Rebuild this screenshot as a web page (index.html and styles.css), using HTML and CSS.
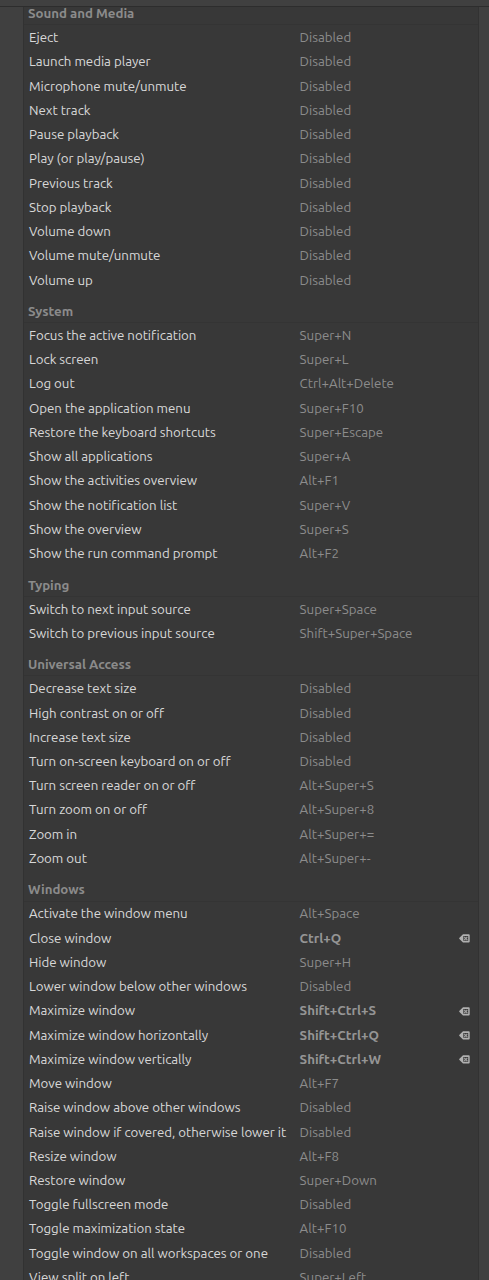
FILE: index.html
```html
<!DOCTYPE html>
<html lang="en">
<head>
<meta charset="utf-8">
<title>Keyboard Shortcuts</title>
<link rel="stylesheet" href="styles.css">
</head>
<body>
<svg class="defs" aria-hidden="true"><symbol id="reset" viewBox="0 0 11 9"><path fill-rule="evenodd" d="M4 0.3H9.7Q10.7 0.3 10.7 1.3V7.5Q10.7 8.5 9.7 8.5H4L0.2 4.7V4.1ZM4.3 2V6.8H9.2V2Z"/><path d="M5.2 2.9L8.3 6M8.3 2.9L5.2 6" stroke="currentColor" stroke-width="1.2"/></symbol></svg>
<header class="titlebar"></header>
<main class="list">
<section><h2>Sound and Media</h2>
<div class="row"><span>Eject</span><kbd>Disabled</kbd></div>
<div class="row"><span>Launch media player</span><kbd>Disabled</kbd></div>
<div class="row"><span>Microphone mute/unmute</span><kbd>Disabled</kbd></div>
<div class="row"><span>Next track</span><kbd>Disabled</kbd></div>
<div class="row"><span>Pause playback</span><kbd>Disabled</kbd></div>
<div class="row"><span>Play (or play/pause)</span><kbd>Disabled</kbd></div>
<div class="row"><span>Previous track</span><kbd>Disabled</kbd></div>
<div class="row"><span>Stop playback</span><kbd>Disabled</kbd></div>
<div class="row"><span>Volume down</span><kbd>Disabled</kbd></div>
<div class="row"><span>Volume mute/unmute</span><kbd>Disabled</kbd></div>
<div class="row"><span>Volume up</span><kbd>Disabled</kbd></div>
</section>
<section><h2>System</h2>
<div class="row"><span>Focus the active notification</span><kbd>Super+N</kbd></div>
<div class="row"><span>Lock screen</span><kbd>Super+L</kbd></div>
<div class="row"><span>Log out</span><kbd>Ctrl+Alt+Delete</kbd></div>
<div class="row"><span>Open the application menu</span><kbd>Super+F10</kbd></div>
<div class="row"><span>Restore the keyboard shortcuts</span><kbd>Super+Escape</kbd></div>
<div class="row"><span>Show all applications</span><kbd>Super+A</kbd></div>
<div class="row"><span>Show the activities overview</span><kbd>Alt+F1</kbd></div>
<div class="row"><span>Show the notification list</span><kbd>Super+V</kbd></div>
<div class="row"><span>Show the overview</span><kbd>Super+S</kbd></div>
<div class="row"><span>Show the run command prompt</span><kbd>Alt+F2</kbd></div>
</section>
<section><h2>Typing</h2>
<div class="row"><span>Switch to next input source</span><kbd>Super+Space</kbd></div>
<div class="row"><span>Switch to previous input source</span><kbd>Shift+Super+Space</kbd></div>
</section>
<section><h2>Universal Access</h2>
<div class="row"><span>Decrease text size</span><kbd>Disabled</kbd></div>
<div class="row"><span>High contrast on or off</span><kbd>Disabled</kbd></div>
<div class="row"><span>Increase text size</span><kbd>Disabled</kbd></div>
<div class="row"><span>Turn on-screen keyboard on or off</span><kbd>Disabled</kbd></div>
<div class="row"><span>Turn screen reader on or off</span><kbd>Alt+Super+S</kbd></div>
<div class="row"><span>Turn zoom on or off</span><kbd>Alt+Super+8</kbd></div>
<div class="row"><span>Zoom in</span><kbd>Alt+Super+=</kbd></div>
<div class="row"><span>Zoom out</span><kbd>Alt+Super+-</kbd></div>
</section>
<section><h2>Windows</h2>
<div class="row"><span>Activate the window menu</span><kbd>Alt+Space</kbd></div>
<div class="row"><span>Close window</span><kbd class="custom">Ctrl+Q</kbd><svg class="reset"><use href="#reset"/></svg></div>
<div class="row"><span>Hide window</span><kbd>Super+H</kbd></div>
<div class="row"><span>Lower window below other windows</span><kbd>Disabled</kbd></div>
<div class="row"><span>Maximize window</span><kbd class="custom">Shift+Ctrl+S</kbd><svg class="reset"><use href="#reset"/></svg></div>
<div class="row"><span>Maximize window horizontally</span><kbd class="custom">Shift+Ctrl+Q</kbd><svg class="reset"><use href="#reset"/></svg></div>
<div class="row"><span>Maximize window vertically</span><kbd class="custom">Shift+Ctrl+W</kbd><svg class="reset"><use href="#reset"/></svg></div>
<div class="row"><span>Move window</span><kbd>Alt+F7</kbd></div>
<div class="row"><span>Raise window above other windows</span><kbd>Disabled</kbd></div>
<div class="row"><span>Raise window if covered, otherwise lower it</span><kbd>Disabled</kbd></div>
<div class="row"><span>Resize window</span><kbd>Alt+F8</kbd></div>
<div class="row"><span>Restore window</span><kbd>Super+Down</kbd></div>
<div class="row"><span>Toggle fullscreen mode</span><kbd>Disabled</kbd></div>
<div class="row"><span>Toggle maximization state</span><kbd>Alt+F10</kbd></div>
<div class="row"><span>Toggle window on all workspaces or one</span><kbd>Disabled</kbd></div>
<div class="row"><span>View split on left</span><kbd>Super+Left</kbd></div>
</section>
</main>
</body>
</html>
```
FILE: styles.css
```css
* { box-sizing: border-box; }
body {
  margin: 0;
  height: 1280px;
  overflow: hidden;
  display: flex;
  flex-direction: column;
  background: #404040;
  color: #d8d8d8;
  font: 13.3px/20px Ubuntu, "Noto Sans", sans-serif;
  letter-spacing: -0.03px;
}
.defs { position: absolute; width: 0; height: 0; }
.titlebar {
  flex: none;
  height: 7px;
  background: #404040;
  border-bottom: 1px solid #2d2d2d;
}
.list {
  flex: 1;
  min-height: 0;
  margin: 0 10px 0 23px;
  overflow: hidden;
  background: #383838;
  border: solid #323232;
  border-width: 0 1px;
}
section:first-child { margin-top: -13px; }
h2 {
  margin: 0;
  height: 31.26px;
  padding: 9.2px 4px 0;
  border-bottom: 1px solid #343434;
  font-size: 13.3px;
  letter-spacing: -0.03px;
  line-height: 21.5px;
  font-weight: 700;
  color: #8b8b8b;
}
.row {
  display: grid;
  grid-template-columns: 270.6px 1fr 11px;
  align-items: center;
  height: 24.24px;
  padding: 1.6px 8px 0 5px;
  white-space: nowrap;
}
kbd { font: inherit; color: #8c8c8c; letter-spacing: 0; }
.custom { font-weight: 700; color: #959595; }
.reset { width: 11px; height: 9px; fill: #b0b0b0; color: #a0a0a0; }
```
